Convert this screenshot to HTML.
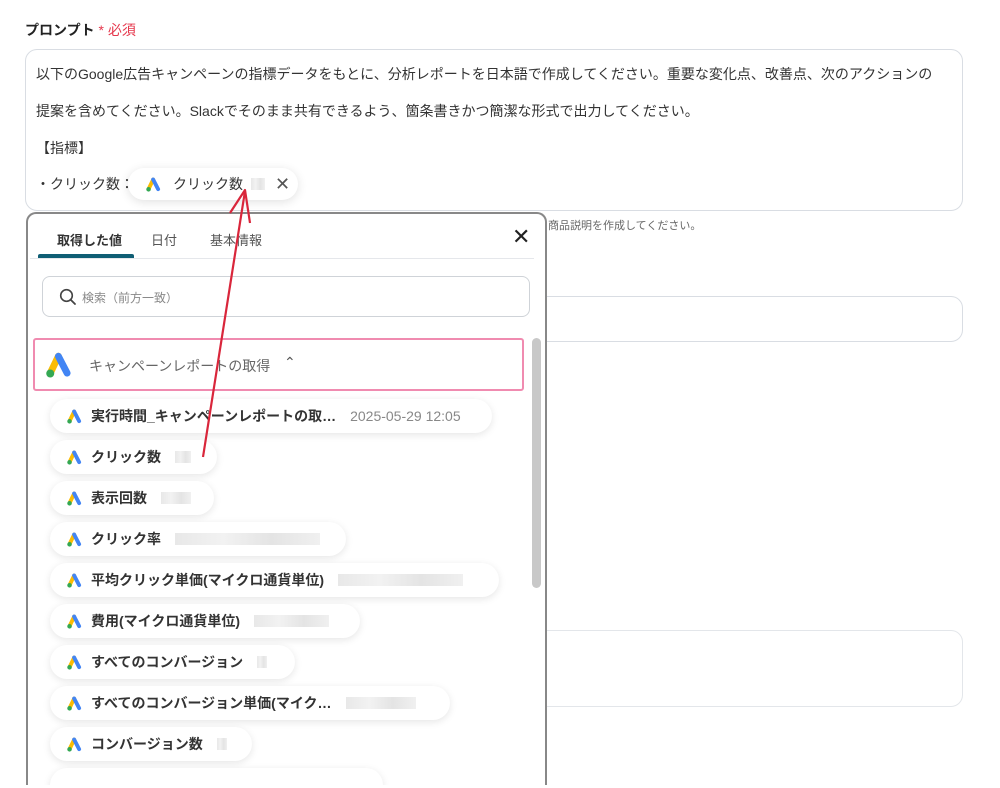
<!DOCTYPE html>
<html><head><meta charset="utf-8">
<style>
*{box-sizing:border-box;margin:0;padding:0}
body{width:1000px;height:788px;overflow:hidden;background:#fff;font-family:"Liberation Sans","Noto Sans CJK JP",sans-serif;color:#333;position:relative}
.abs{position:absolute}
.box{position:absolute;border:1px solid #d9dde3;border-radius:12px;background:#fff}
.t{font-size:14px;color:#333;white-space:nowrap}
.pill{position:absolute;left:50px;height:34px;border-radius:17px;background:#fff;box-shadow:0 2px 8px rgba(0,0,0,.10);display:flex;align-items:center;padding-left:16px;font-size:14px;font-weight:bold;color:#333;white-space:nowrap}
.pill svg{margin-right:8px}
.blur{display:inline-block;height:12px;background:linear-gradient(90deg,#e8e8e8,#f2f2f2,#e4e4e4,#f0f0f0);margin-left:14px}
</style></head><body>
<svg width="0" height="0" style="position:absolute"><defs>
<symbol id="ga" viewBox="0 0 24 24"><line x1="11.5" y1="5" x2="5" y2="18.5" stroke="#fbbc04" stroke-width="5.5" stroke-linecap="round"/><line x1="11.5" y1="5" x2="18.5" y2="18.5" stroke="#4285f4" stroke-width="5.5" stroke-linecap="round"/><circle cx="5" cy="18.8" r="3.2" fill="#34a853"/></symbol>
</defs></svg>

<div class="abs" style="left:25px;top:20px;font-size:14px;font-weight:bold;color:#222">プロンプト <span style="color:#e5364b;font-weight:normal">* 必須</span></div>

<div class="box" style="left:25px;top:49px;width:938px;height:162px"></div>
<div class="abs t" style="left:36px;top:64px">以下のGoogle広告キャンペーンの指標データをもとに、分析レポートを日本語で作成してください。重要な変化点、改善点、次のアクションの</div>
<div class="abs t" style="left:36px;top:101px">提案を含めてください。Slackでそのまま共有できるよう、箇条書きかつ簡潔な形式で出力してください。</div>
<div class="abs t" style="left:36px;top:138px">【指標】</div>
<div class="abs t" style="left:36px;top:174px">・クリック数：</div>
<div class="abs" style="left:128px;top:168px;width:170px;height:32px;border-radius:16px;background:#fff;box-shadow:0 2px 10px rgba(0,0,0,.12);display:flex;align-items:center;padding-left:17px;font-size:14px;color:#333">
<svg width="17" height="17"><use href="#ga"/></svg><span style="margin-left:11px">クリック数</span><span class="blur" style="width:14px;margin-left:8px"></span><span style="margin-left:10px;font-size:18px;color:#555">✕</span></div>

<div class="abs" style="left:548px;top:217px;font-size:11px;color:#666">商品説明を作成してください。</div>
<div class="box" style="left:400px;top:296px;width:563px;height:46px"></div>
<div class="box" style="left:400px;top:630px;width:563px;height:77px;border-color:#e3e6ea"></div>

<!-- popup -->
<div class="abs" style="left:26px;top:212px;width:521px;height:576px;border:2px solid #888;border-bottom:none;border-radius:10px 10px 0 0;background:#fff;overflow:hidden">
  <div class="abs" style="left:29px;top:16px;font-size:13px;font-weight:bold;color:#333">取得した値</div>
  <div class="abs" style="left:123px;top:16px;font-size:13px;color:#555">日付</div>
  <div class="abs" style="left:182px;top:16px;font-size:13px;color:#555">基本情報</div>
  <div class="abs" style="left:484px;top:12px;font-size:22px;color:#222;line-height:22px">✕</div>
  <div class="abs" style="left:10px;top:40px;width:96px;height:4px;background:#0f5e74;border-radius:2px 2px 0 0"></div>
  <div class="abs" style="left:2px;top:44px;width:504px;height:1px;background:#e5e7eb"></div>
  <div class="abs" style="left:14px;top:62px;width:488px;height:41px;border:1px solid #cfd3d8;border-radius:8px"></div>
  <svg class="abs" style="left:31px;top:74px" width="18" height="18" viewBox="0 0 18 18"><circle cx="7.5" cy="7.5" r="5.8" fill="none" stroke="#444" stroke-width="1.6"/><line x1="11.7" y1="11.7" x2="16" y2="16" stroke="#444" stroke-width="1.8" stroke-linecap="round"/></svg>
  <div class="abs" style="left:54px;top:75px;font-size:12px;color:#888">検索（前方一致）</div>
  <div class="abs" style="left:5px;top:124px;width:491px;height:53px;border:2px solid #f08bb0;border-radius:3px"></div>
  <svg class="abs" style="left:16px;top:136px" width="30" height="30"><use href="#ga"/></svg>
  <div class="abs" style="left:61px;top:142px;font-size:14px;color:#666">キャンペーンレポートの取得</div>
  <div class="abs" style="left:256px;top:140px;font-size:14px;color:#555">⌃</div>
  <div class="abs" style="left:504px;top:124px;width:9px;height:250px;background:#c8c8c8;border-radius:5px"></div>
</div>

<div class="pill" style="top:399px;width:442px"><svg width="17" height="17"><use href="#ga"/></svg>実行時間_キャンペーンレポートの取…<span style="font-weight:normal;color:#888;margin-left:14px">2025-05-29 12:05</span></div>
<div class="pill" style="top:440px;width:167px"><svg width="17" height="17"><use href="#ga"/></svg>クリック数<span class="blur" style="width:16px"></span></div>
<div class="pill" style="top:481px;width:164px"><svg width="17" height="17"><use href="#ga"/></svg>表示回数<span class="blur" style="width:30px"></span></div>
<div class="pill" style="top:522px;width:296px"><svg width="17" height="17"><use href="#ga"/></svg>クリック率<span class="blur" style="width:145px"></span></div>
<div class="pill" style="top:563px;width:449px"><svg width="17" height="17"><use href="#ga"/></svg>平均クリック単価(マイクロ通貨単位)<span class="blur" style="width:125px"></span></div>
<div class="pill" style="top:604px;width:310px"><svg width="17" height="17"><use href="#ga"/></svg>費用(マイクロ通貨単位)<span class="blur" style="width:75px"></span></div>
<div class="pill" style="top:645px;width:245px"><svg width="17" height="17"><use href="#ga"/></svg>すべてのコンバージョン<span class="blur" style="width:10px"></span></div>
<div class="pill" style="top:686px;width:400px"><svg width="17" height="17"><use href="#ga"/></svg>すべてのコンバージョン単価(マイク…<span class="blur" style="width:70px"></span></div>
<div class="pill" style="top:727px;width:202px"><svg width="17" height="17"><use href="#ga"/></svg>コンバージョン数<span class="blur" style="width:10px"></span></div>
<div class="pill" style="top:768px;width:333px;height:20px;border-radius:17px 17px 0 0;overflow:hidden"></div>
<div class="abs" style="left:26px;top:785px;width:521px;height:3px;background:#fff"></div>

<svg class="abs" style="left:0;top:0" width="1000" height="788"><line x1="203" y1="457" x2="245" y2="191" stroke="#d9263b" stroke-width="2.2"/><polyline points="230,213 245,190 250,223" fill="none" stroke="#d9263b" stroke-width="2.2" stroke-linejoin="round"/></svg>
</body></html>
